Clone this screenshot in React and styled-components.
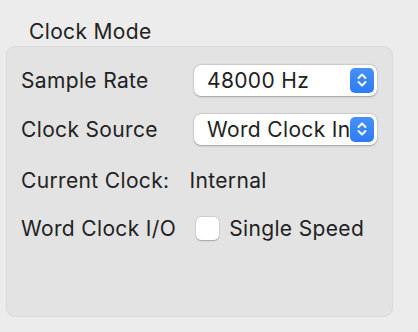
import styled, { createGlobalStyle } from "styled-components";

const GlobalStyle = createGlobalStyle`
  html, body {
    margin: 0;
    padding: 0;
    background: #ececec;
  }
  body {
    font-family: Inter, "Liberation Sans", sans-serif;
    font-size: 21px;
    letter-spacing: 0.35px;
    color: #222222;
  }
`;

const Window = styled.div`
  width: 418px;
  height: 332px;
  box-sizing: border-box;
  padding: 0 25px 15px 6px;
  display: flex;
  flex-direction: column;
`;

const Title = styled.div`
  line-height: 24px;
  margin: 20px 0 2px 23px;
`;

const Panel = styled.div`
  flex: 1;
  box-sizing: border-box;
  background: #e3e3e3;
  border: 1px solid #dadada;
  border-radius: 9px;
  padding: 17px 15px 0 14px;
  display: flex;
  flex-direction: column;
`;

const Row = styled.div`
  display: flex;
  align-items: center;
  height: 32px;
  margin-top: ${(p) => p.$top || 0}px;
  gap: ${(p) => p.$gap || 0}px;
`;

const Label = styled.div`
  width: ${(p) => (p.$width ? `${p.$width}px` : "auto")};
  flex-shrink: 0;
  white-space: nowrap;
`;

const Value = styled.div`
  white-space: nowrap;
`;

const Popup = styled.div`
  position: relative;
  width: 183px;
  height: 31px;
  box-sizing: border-box;
  background: #ffffff;
  border-radius: 7px;
  box-shadow: 0 0.5px 2px rgba(0, 0, 0, 0.28), 0 0 0 0.5px rgba(0, 0, 0, 0.06);
  display: flex;
  align-items: center;
  padding-left: 13px;
  overflow: hidden;
  white-space: nowrap;
`;

const Stepper = styled.div`
  position: absolute;
  right: 3px;
  top: 3px;
  width: 24px;
  height: 25px;
  border-radius: 5px;
  background: linear-gradient(#4690f8, #2f7bf5);
  display: flex;
  align-items: center;
  justify-content: center;
`;

const Checkbox = styled.div`
  width: 23px;
  height: 23px;
  box-sizing: border-box;
  background: #ffffff;
  border-radius: 5px;
  box-shadow: 0 0.5px 1.5px rgba(0, 0, 0, 0.25), 0 0 0 0.5px rgba(0, 0, 0, 0.08);
`;

const CheckLabel = styled.label`
  display: flex;
  align-items: center;
  gap: 10px;
`;

const Chevrons = () => (
  <svg width="12" height="18" viewBox="0 0 12 18">
    <path
      d="M2.5 7 L6 3.5 L9.5 7 M2.5 11 L6 14.5 L9.5 11"
      fill="none"
      stroke="#ffffff"
      strokeWidth="1.9"
      strokeLinecap="round"
      strokeLinejoin="round"
    />
  </svg>
);

const Select = ({ value }) => (
  <Popup>
    {value}
    <Stepper>
      <Chevrons />
    </Stepper>
  </Popup>
);

const App = () => (
  <>
    <GlobalStyle />
    <Window>
      <Title>Clock Mode</Title>
      <Panel>
        <Row>
          <Label $width={173}>Sample Rate</Label>
          <Select value="48000 Hz" />
        </Row>
        <Row $top={17}>
          <Label $width={173}>Clock Source</Label>
          <Select value="Word Clock In" />
        </Row>
        <Row $top={19} $gap={20}>
          <Label>Current Clock:</Label>
          <Value>Internal</Value>
        </Row>
        <Row $top={16} $gap={20}>
          <Label>Word Clock I/O</Label>
          <CheckLabel>
            <Checkbox />
            Single Speed
          </CheckLabel>
        </Row>
      </Panel>
    </Window>
  </>
);

export default App;
